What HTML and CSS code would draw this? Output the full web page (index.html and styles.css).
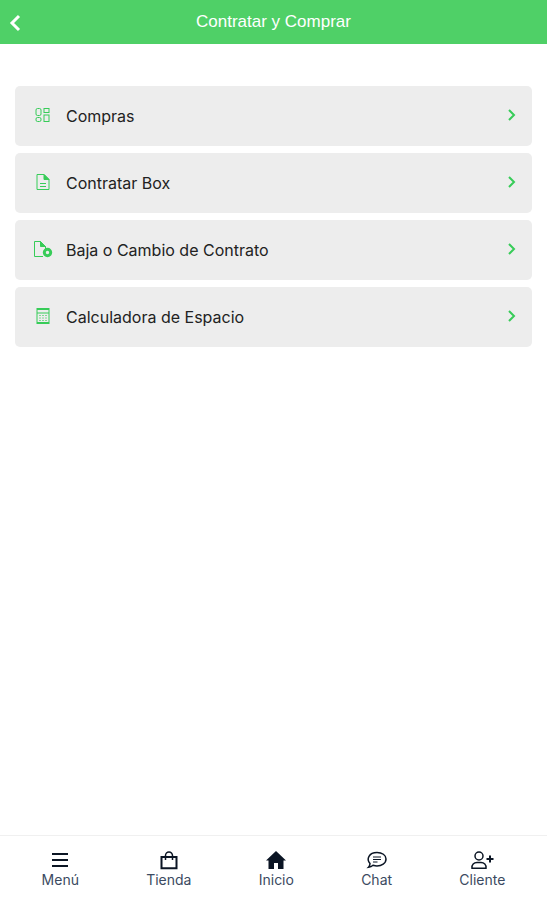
FILE: index.html
```html
<!DOCTYPE html>
<html lang="es">
<head>
    <meta charset="UTF-8">
    <meta name="viewport" content="width=device-width, initial-scale=1.0">
    <title>Contratar y Comprar</title>
    <link rel="stylesheet" href="styles.css">
</head>
<body>
    <header class="header">
        <a href="#" class="back" aria-label="Volver">
            <svg width="12" height="20" viewBox="0 0 12 20"><path d="M10 4 L3 11 L10 18"/></svg>
        </a>
        <h1>Contratar y Comprar</h1>
    </header>

    <main class="menu">
        <a href="#" class="menu-item">
            <svg class="icon" width="22" height="22" viewBox="0 0 22 22">
                <rect x="5" y="3.500" width="5" height="7" rx="1.500"/>
                <rect x="13" y="3.500" width="5" height="4"/>
                <rect x="5" y="12.500" width="5" height="4" rx="1.500"/>
                <rect x="13" y="10" width="5" height="6.500"/>
            </svg>
            <span>Compras</span>
            <svg class="arrow" width="12" height="16" viewBox="0 0 12 16"><path d="M3 2 L8 7 L3 12"/></svg>
        </a>
        <a href="#" class="menu-item">
            <svg class="icon" width="22" height="22" viewBox="0 0 22 22">
                <path d="M13 2.500 H6 V17.500 H18 V7.500 Z"/>
                <path class="fill" d="M13 2.500 V7.500 H18 Z"/>
                <path d="M9 11.500 H15 M9 14.500 H15"/>
            </svg>
            <span>Contratar Box</span>
            <svg class="arrow" width="12" height="16" viewBox="0 0 12 16"><path d="M3 2 L8 7 L3 12"/></svg>
        </a>
        <a href="#" class="menu-item">
            <svg class="icon" width="22" height="22" viewBox="0 0 22 22">
                <path d="M12 17.500 H3.500 V2.500 H9.500 L14.500 7.500 V10"/>
                <path class="fill" d="M9.500 2.500 V7.500 H14.500 Z"/>
                <circle class="ring" cx="16.500" cy="13.500" r="3.200"/>
            </svg>
            <span>Baja o Cambio de Contrato</span>
            <svg class="arrow" width="12" height="16" viewBox="0 0 12 16"><path d="M3 2 L8 7 L3 12"/></svg>
        </a>
        <a href="#" class="menu-item">
            <svg class="icon" width="22" height="22" viewBox="0 0 22 22">
                <rect x="6" y="2.500" width="12" height="15"/>
                <path d="M6 3.500 H18 M6 7 H18 M6 16.500 H18"/>
                <path class="keys" d="M8 9.500 H17 M8 12 H17 M8 14.500 H17"/>
            </svg>
            <span>Calculadora de Espacio</span>
            <svg class="arrow" width="12" height="16" viewBox="0 0 12 16"><path d="M3 2 L8 7 L3 12"/></svg>
        </a>
    </main>

    <nav class="tabs">
        <a href="#" class="tab">
            <svg width="24" height="20" viewBox="0 0 24 20"><path d="M4 4 H20 M4 10 H20 M4 16 H20"/></svg>
            <span>Menú</span>
        </a>
        <a href="#" class="tab">
            <svg width="24" height="20" viewBox="0 0 24 20">
                <path d="M4.500 7 H19.500 V18.200 H4.500 Z"/>
                <path class="thin" d="M8.500 10 V5.500 a3.500 3.500 0 0 1 7 0 V10"/>
            </svg>
            <span>Tienda</span>
        </a>
        <a href="#" class="tab">
            <svg width="24" height="20" viewBox="0 0 24 20">
                <path class="solid" d="M12 1 L22 10.500 H19.500 V19 H14 V13 H10 V19 H4.500 V10.500 H2 Z"/>
            </svg>
            <span>Inicio</span>
        </a>
        <a href="#" class="tab">
            <svg width="24" height="20" viewBox="0 0 24 20">
                <path class="thin" d="M5 13.500 C1 9 4 2.500 12 2.500 C17 2.500 21 5 21 9 C21 13.500 16.500 16 12 16 C10.500 16 9 15.600 8 15.300 C6.800 16.500 5 17.200 3.500 17.300 C4.600 16.300 5 15 5 13.500 Z"/>
                <path class="hair" d="M8 7 H16 M8 9.500 H16 M8 12 H12.500"/>
            </svg>
            <span>Chat</span>
        </a>
        <a href="#" class="tab">
            <svg width="24" height="20" viewBox="0 0 24 20">
                <circle class="thin" cx="9" cy="6" r="4"/>
                <path class="thin" d="M2 18.300 C1.500 14.500 4 12.500 7 12.500 H11 C14 12.500 16.500 14.500 16 18.300 Z"/>
                <path d="M16.500 9 H23.500 M20 5.500 V12.500"/>
            </svg>
            <span>Cliente</span>
        </a>
    </nav>
</body>
</html>
```
FILE: styles.css
```css
* {
    margin: 0;
    padding: 0;
    box-sizing: border-box;
}

body {
    display: flex;
    flex-direction: column;
    min-height: 100vh;
    background: #fff;
    font-family: Inter, 'Liberation Sans', sans-serif;
}

a {
    color: inherit;
    text-decoration: none;
}

svg {
    display: block;
    flex: none;
    fill: none;
    stroke: currentColor;
}

.header {
    display: grid;
    grid-template-columns: 40px 1fr 40px;
    align-items: center;
    height: 44px;
    background: #4fd067;
    color: #fff;
}

.back {
    padding-left: 9px;
}

.back svg {
    stroke-width: 3;
}

h1 {
    font-family: 'Liberation Sans', Arial, sans-serif;
    font-size: 17px;
    font-weight: 400;
    text-align: center;
}

.menu {
    display: grid;
    gap: 7px;
    padding: 42px 15px;
}

.menu-item {
    display: flex;
    align-items: center;
    height: 60px;
    padding: 0 14px 0 16px;
    border-radius: 5px;
    background: #ededed;
    color: #222;
    font-size: 16px;
}

.menu-item span {
    flex: 1;
    margin-left: 13px;
}

.icon,
.arrow {
    color: #37cc58;
}

.arrow {
    stroke-width: 2;
}

.icon .fill {
    fill: currentColor;
}

.icon .ring {
    stroke-width: 3;
}

.icon .keys {
    stroke-dasharray: 2 1;
    opacity: 0.6;
}

.tabs {
    display: flex;
    justify-content: space-around;
    margin-top: auto;
    padding: 14px 8px 10px;
    border-top: 1px solid #f0f0f0;
}

.tab {
    display: flex;
    flex-direction: column;
    align-items: center;
    color: #3b4a61;
    font-size: 14px;
    line-height: 20px;
}

.tab svg {
    color: #0b1524;
    stroke-width: 2;
}

.tab .thin {
    stroke-width: 1.5;
}

.tab .hair {
    stroke-width: 1;
}

.tab .solid {
    fill: currentColor;
    stroke: none;
}
```
